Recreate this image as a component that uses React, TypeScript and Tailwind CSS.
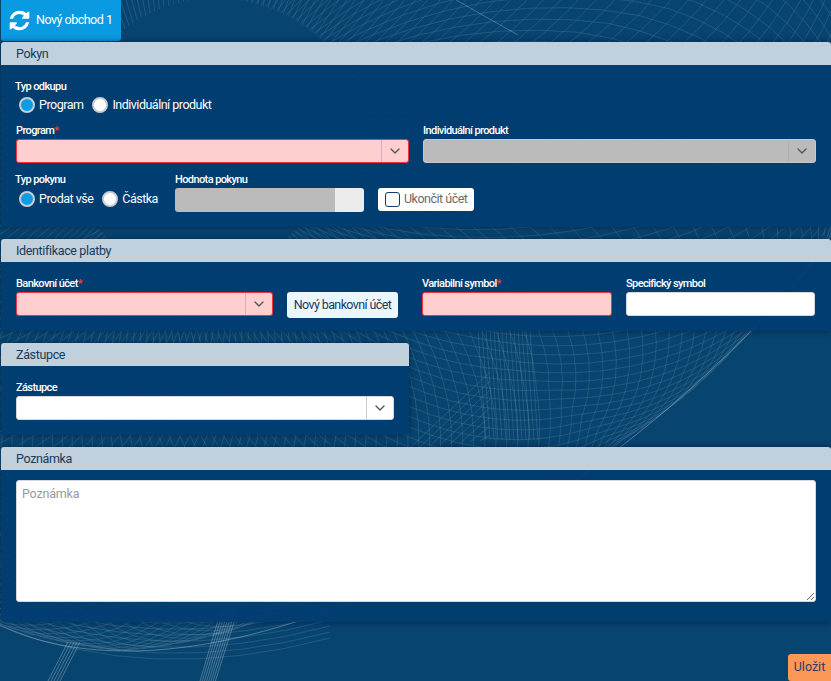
import type { ReactNode } from "react";
import { ChevronDown } from "lucide-react";

const font = { fontFamily: "Roboto, 'Liberation Sans', sans-serif" };

// okraj glóbu v polárních souřadnicích kolem středu (200, 150)
const rim: [number, number][] = [
  [-3.0, 520],
  [-0.3, 690],
  [0.142, 637],
  [0.337, 575],
  [0.612, 510],
  [1.354, 464],
  [1.729, 507],
  [1.97, 515],
  [3.3, 520],
];

function rimRadius(a: number) {
  const angle = a > 3.3 ? a - 2 * Math.PI : a;
  for (let i = 0; i < rim.length - 1; i++) {
    const [a0, r0] = rim[i];
    const [a1, r1] = rim[i + 1];
    if (angle >= a0 && angle <= a1) {
      return r0 + ((r1 - r0) * (angle - a0)) / (a1 - a0);
    }
  }
  return 520;
}

function spiral(start: number, dir: number) {
  const points: string[] = [];
  for (let i = 0; i <= 22; i++) {
    const u = 0.25 + (i / 22) * (Math.PI / 2 - 0.25);
    const a = start + dir * 0.62 * (u - 0.25);
    const r = rimRadius(a) * Math.sin(u);
    points.push(`${(200 + r * Math.cos(a)).toFixed(1)} ${(150 + r * Math.sin(a)).toFixed(1)}`);
  }
  return `M${points.join("L")}`;
}

const meshA = Array.from({ length: 150 }, (_, i) => spiral(-2.6 + i * 0.034, 1));
const meshB = Array.from({ length: 150 }, (_, i) => spiral(-1.6 + i * 0.034, -1));
const rimPath = "M0 625 C40 645 85 651 130 651 C320 650 620 505 831 240";

// Drátěný glóbus na pozadí stránky
function GlobeBackdrop() {
  const rings = Array.from({ length: 14 }, (_, i) => {
    const y = 566 + i * 6;
    return `M0 ${y - 18} Q150 ${y + 42} 330 ${y - 6}`;
  });
  const boxV = Array.from({ length: 14 }, (_, i) => `M${478 + i * 4} 330 L${486 + i * 4} 440`);
  const wing = Array.from({ length: 8 }, (_, i) => `M${410 + i * 10} ${448 - i * 1} L${490} ${372 + i * 9}`);
  const strutA = Array.from({ length: 5 }, (_, i) => `M${68 + i * 3} 642 L${48 + i * 3} 681`);
  const strutB = Array.from({ length: 8 }, (_, i) => `M${222 + i * 2.4} 607 L${200 + i * 2.2} 681`);

  return (
    <svg className="pointer-events-none absolute inset-0" width={831} height={681} viewBox="0 0 831 681" fill="none">
      <g stroke="#ffffff" strokeWidth={0.5} opacity={0.22}>
        {meshA.map((d, i) => (
          <path key={i} d={d} />
        ))}
        {meshB.map((d, i) => (
          <path key={i} d={d} />
        ))}
      </g>
      <g stroke="#ffffff" strokeWidth={0.6} opacity={0.2}>
        {rings.map((d) => (
          <path key={d} d={d} />
        ))}
        {boxV.map((d) => (
          <path key={d} d={d} />
        ))}
        {wing.map((d) => (
          <path key={d} d={d} />
        ))}
      </g>
      <path d={rimPath} stroke="#ffffff" strokeWidth={1} opacity={0.3} />
      <path d="M456 0 L518 35" stroke="#ffffff" strokeWidth={1} opacity={0.25} />
      <g stroke="#ffffff" strokeWidth={1} opacity={0.28}>
        {strutA.map((d) => (
          <path key={d} d={d} />
        ))}
        {strutB.map((d) => (
          <path key={d} d={d} />
        ))}
      </g>
    </svg>
  );
}

function RefreshIcon() {
  return (
    <svg width={23} height={23} viewBox="0 0 1792 1792" fill="currentColor" className="shrink-0">
      <path d="M1639 1056q0 5-1 7-64 268-268 434.5t-478 166.5q-146 0-282.5-55t-243.5-157l-129 129q-19 19-45 19t-45-19-19-45v-448q0-26 19-45t45-19h448q26 0 45 19t19 45-19 45l-137 137q71 66 161 102t187 36q134 0 250-65t186-179q11-17 53-117 8-23 30-23h192q13 0 22.5 9.5t9.5 22.5zm25-800v448q0 26-19 45t-45 19h-448q-26 0-45-19t-19-45 19-45l138-138q-148-137-349-137-134 0-250 65t-186 179q-11 17-53 117-8 23-30 23h-199q-13 0-22.5-9.5t-9.5-22.5v-7q65-268 270-434.5t480-166.5q146 0 284 55.5t245 156.5l130-129q19-19 45-19t45 19 19 45z" />
    </svg>
  );
}

function Panel({ title, className, children }: { title: string; className: string; children: ReactNode }) {
  return (
    <section className={`rounded-[3px] bg-[#003d71]/94 shadow-[0_0_6px_rgba(0,20,45,0.6)] ${className}`}>
      <h2 className="flex h-[23px] items-center rounded-t-[3px] bg-[#c8d6e2]/96 pt-px pl-[15px] text-[12.5px] font-normal leading-none tracking-[-0.35px] text-[#173a5c]">
        {title}
      </h2>
      {children}
    </section>
  );
}

function Label({ text, required, className = "" }: { text: string; required?: boolean; className?: string }) {
  return (
    <label className={`mb-[2px] block h-[13px] text-[11px] leading-[13px] font-medium tracking-[-0.6px] text-white ${className}`}>
      {text}
      {required && <span className="text-[#ff3b3b]">*</span>}
    </label>
  );
}

function Select({ tone, width }: { tone: "error" | "off" | "plain"; width: string }) {
  const look = {
    error: "border-[#f5333f] bg-[#ffcfcf]",
    off: "border-[#c4c9cf] bg-[#bbbbbb]",
    plain: "border-[#d5d9dd] bg-white",
  }[tone];
  return (
    <div className={`flex h-6 items-stretch rounded-[3px] border ${look} ${width}`}>
      <div className="flex-1" />
      <div className="flex w-[27px] items-center justify-center border-l border-[#a9a9a9]/60">
        <ChevronDown size={16} strokeWidth={2} className="text-[#555555]" />
      </div>
    </div>
  );
}

function Radio({ label, checked }: { label: string; checked?: boolean }) {
  return (
    <span className="flex items-center gap-[4px] text-[12.5px] leading-none tracking-[-0.5px] text-white">
      <span className={`size-[16px] rounded-full border-2 border-[#c9ced3] ${checked ? "bg-[#0c9ce6]" : "bg-white"}`} />
      {label}
    </span>
  );
}

export default function App() {
  return (
    <div className="relative h-[681px] w-[831px] overflow-hidden bg-[#07446f]" style={font}>
      <GlobeBackdrop />
      <div className="relative">
        <div className="ml-px flex h-[41px] w-[120px] items-center gap-[5px] rounded-b-[3px] bg-[#0a9ae2] pl-[7px] text-[12.5px] tracking-[-0.5px] text-white">
          <RefreshIcon />
          Nový obchod 1
        </div>

        <Panel title="Pokyn" className="mt-px ml-px h-[185px]">
          <div className="pt-[15px] pl-[14px]">
            <Label text="Typ odkupu" />
            <div className="mt-[4px] ml-[4px] flex gap-[9px]">
              <Radio label="Program" checked />
              <Radio label="Individuální produkt" />
            </div>
          </div>
          <div className="mt-[11px] flex gap-[14px] pl-[15px]">
            <div>
              <Label text="Program" required />
              <Select tone="error" width="w-[393px]" />
            </div>
            <div>
              <Label text="Individuální produkt" />
              <Select tone="off" width="w-[393px]" />
            </div>
          </div>
          <div className="mt-[10px] flex pl-[14px]">
            <div className="w-[160px]">
              <Label text="Typ pokynu" />
              <div className="mt-[5px] ml-[4px] flex gap-[9px]">
                <Radio label="Prodat vše" checked />
                <Radio label="Částka" />
              </div>
            </div>
            <div className="ml-0">
              <Label text="Hodnota pokynu" />
              <div className="flex h-6 w-[189px] overflow-hidden rounded-[3px]">
                <div className="w-[160px] bg-[#bbbbbb]" />
                <div className="flex-1 bg-[#ececec]" />
              </div>
            </div>
            <div className="mt-[15px] ml-[14px] flex h-[23px] w-[96px] items-center gap-[4px] rounded-[3px] bg-white pl-[7px] text-[12.5px] tracking-[-0.5px] text-[#6a6a6a]">
              <span className="size-[15px] rounded-[3px] border border-[#0f3f66] bg-white" />
              Ukončit účet
            </div>
          </div>
        </Panel>

        <Panel title="Identifikace platby" className="mt-[12px] ml-px h-[92px]">
          <div className="flex pt-[15px] pl-[15px]">
            <div>
              <Label text="Bankovní účet" required />
              <Select tone="error" width="w-[257px]" />
            </div>
            <div className="mt-[15px] ml-[14px] flex h-[26px] w-[111px] items-center justify-center rounded-[3px] bg-[#eaf7ff] text-[12.5px] tracking-[-0.6px] text-[#173a5c]">
              Nový bankovní účet
            </div>
            <div className="ml-[24px]">
              <Label text="Variabilní symbol" required />
              <div className="h-6 w-[190px] rounded-[3px] border border-[#f5333f] bg-[#ffcfcf]" />
            </div>
            <div className="ml-[14px]">
              <Label text="Specifický symbol" />
              <div className="h-6 w-[189px] rounded-[3px] border border-[#d5d9dd] bg-white" />
            </div>
          </div>
        </Panel>

        <Panel title="Zástupce" className="mt-[12px] ml-px h-[92px] w-[408px]">
          <div className="pt-[15px] pl-[15px]">
            <Label text="Zástupce" />
            <Select tone="plain" width="w-[378px]" />
          </div>
        </Panel>

        <Panel title="Poznámka" className="mt-[12px] ml-px h-[175px]">
          <div className="pt-[10px] pl-[15px]">
            <textarea
              readOnly
              placeholder="Poznámka"
              className="block h-[122px] w-[800px] rounded-[3px] border border-[#d5d9dd] bg-white px-[5px] py-[4px] text-[12.5px] tracking-[-0.2px] placeholder:text-[#9a9a9a]"
            />
          </div>
        </Panel>

        <div className="mt-[32px] flex justify-end">
          <div className="flex h-[27px] w-[43px] items-center justify-center rounded-l-[3px] bg-[#fb9858] text-[12.5px] text-[#2b3a6a]">
            Uložit
          </div>
        </div>
      </div>
    </div>
  );
}
